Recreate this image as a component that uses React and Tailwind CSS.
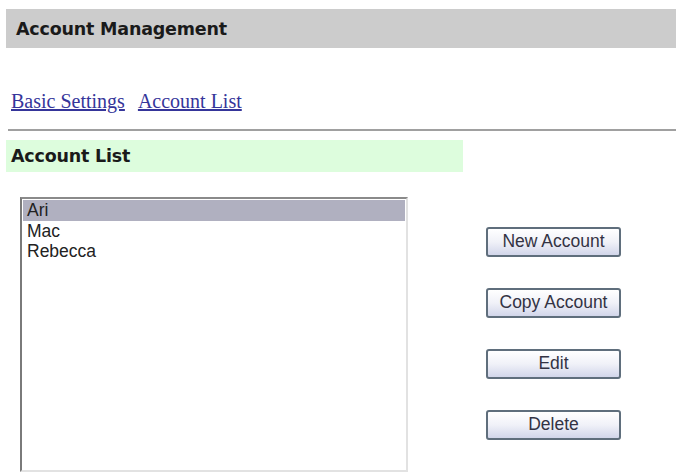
const accounts = ["Ari", "Mac", "Rebecca"];
const actions = ["New Account", "Copy Account", "Edit", "Delete"];

const App = () => {
  return (
    <div className="w-[682px] h-[473px] bg-white overflow-hidden flex flex-col">
      <div className="mx-[6px] mt-[9px] h-[39px] bg-[#cccccc] flex items-center pl-[10px] pt-[1px]">
        <h1 className="font-['DejaVu_Sans',sans-serif] font-bold text-[17.5px] text-[#1a1a1a] tracking-[-0.2px]">
          Account Management
        </h1>
      </div>

      <div className="mt-[42px] ml-[11px] flex gap-[13px] font-['Liberation_Serif',serif] text-[20px] leading-[23px] text-[#35359a]">
        <a className="underline cursor-pointer">Basic Settings</a>
        <a className="underline cursor-pointer">Account List</a>
      </div>

      <div className="mt-[16px] ml-[8px] w-[668px] h-[2px] bg-[#a0a0a0]"></div>

      <div className="mt-[9px] ml-[6px] w-[457px] h-[32px] bg-[#ddfddd] flex items-center pl-[5px]">
        <h2 className="font-['DejaVu_Sans',sans-serif] font-bold text-[17.5px] text-[#1a1a1a] tracking-[-0.2px]">
          Account List
        </h2>
      </div>

      <div className="flex mt-[25px]">
        <div className="ml-[20px] w-[388px] h-[275px] border-2 border-t-[#8a8a8a] border-l-[#7a7a7a] border-r-[#e2e2e2] border-b-[#e2e2e2] p-[1px] font-['Liberation_Sans',sans-serif] text-[17.5px] text-[#222]">
          {accounts.map((name, i) => (
            <div
              key={name}
              className={
                i === 0
                  ? "h-[21px] leading-[21px] pl-[4px] bg-[#b0b0c0]"
                  : "h-[20px] leading-[20px] pl-[4px]"
              }
            >
              {name}
            </div>
          ))}
        </div>

        <div className="ml-[78px] mt-[30px] flex flex-col gap-[31px]">
          {actions.map((label) => (
            <button
              key={label}
              className="w-[135px] h-[30px] border-2 border-[#5f6e7c] rounded-[3px] bg-gradient-to-b from-[#ffffff] via-[#f0f1f8] to-[#d2d6ea] font-['Liberation_Sans',sans-serif] text-[17.5px] text-[#333344] leading-none"
            >
              {label}
            </button>
          ))}
        </div>
      </div>
    </div>
  );
};

export default App;
